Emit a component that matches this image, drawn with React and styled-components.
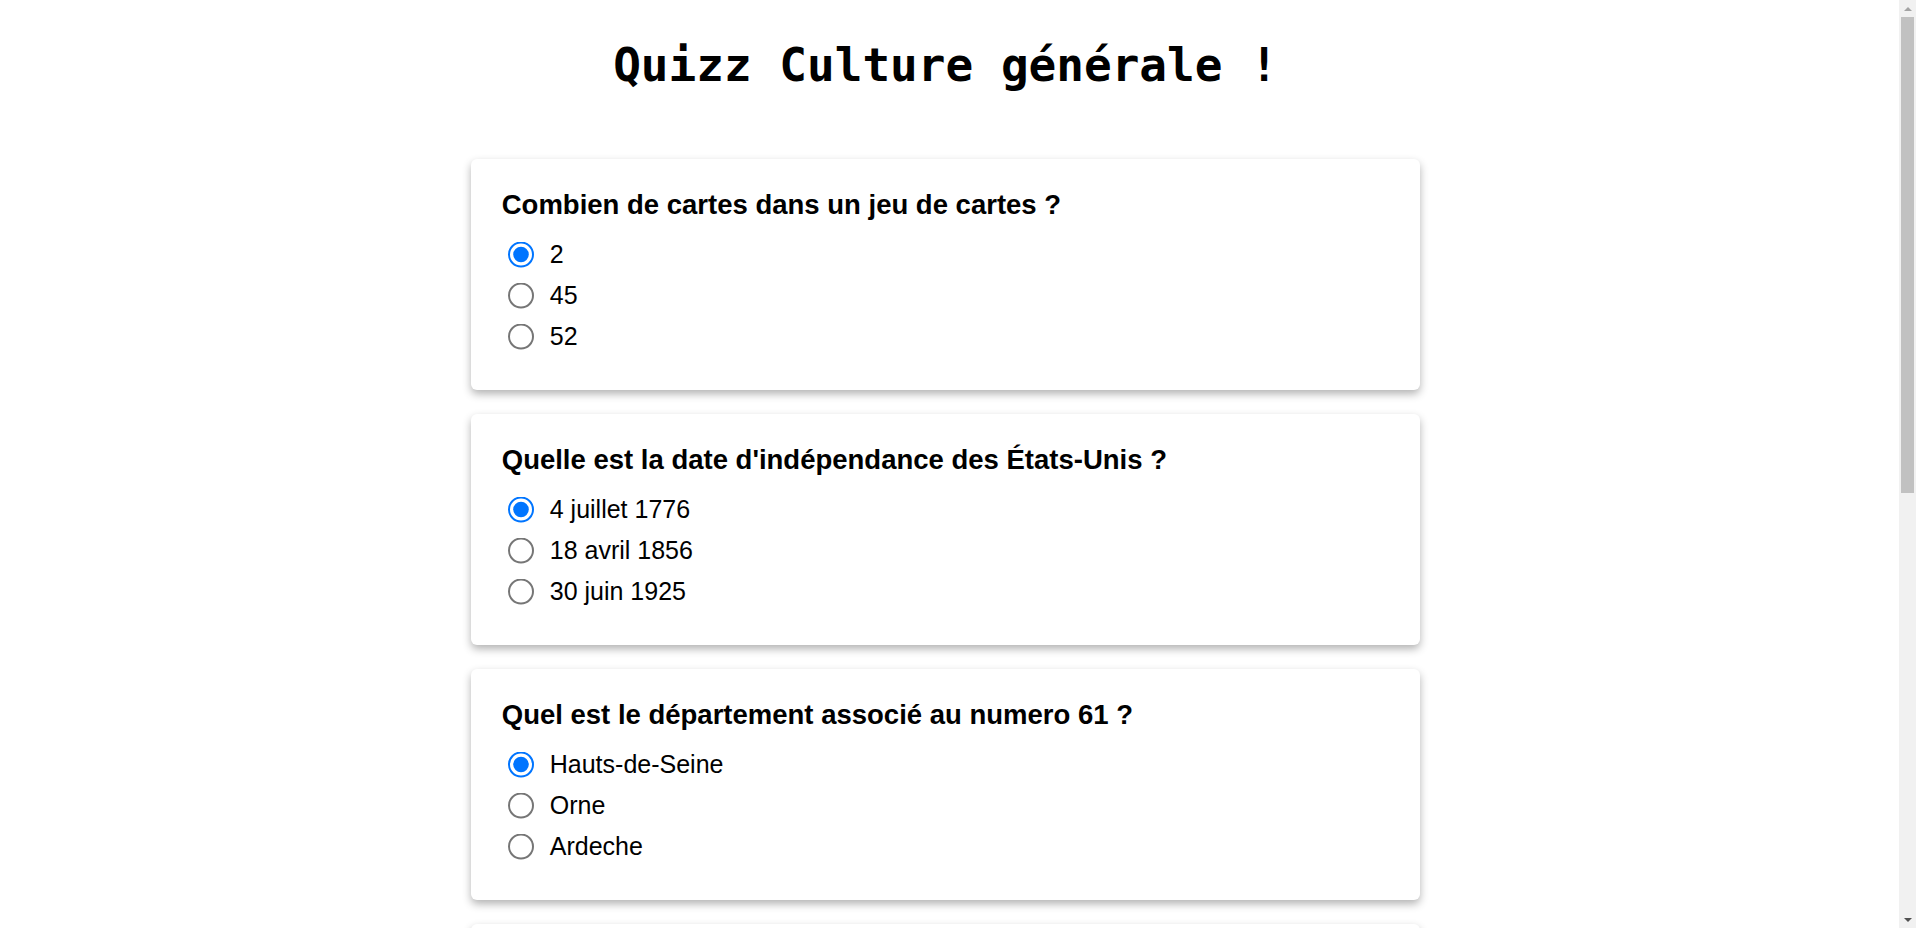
import React from 'react';
import styled, { createGlobalStyle } from 'styled-components';

const GlobalStyle = createGlobalStyle`
  body {
    margin: 0;
    background: #fff;
    font-family: "Liberation Sans", Arial, sans-serif;
  }
`;

const Page = styled.main`
  margin-right: 17px; /* room for the scrollbar */
  padding: 35px 8px 24px 0;
`;

const Title = styled.h1`
  margin: 0 0 64px;
  text-align: center;
  font-family: "DejaVu Sans Mono", monospace;
  font-weight: bold;
  font-size: 46px;
  line-height: 60px;
  color: #000;
`;

const Form = styled.form`
  width: calc(50% + 4px);
  margin: 0 auto;
`;

const Card = styled.section`
  background: #fff;
  border-radius: 6px;
  box-shadow: 0 4px 8px rgba(0, 0, 0, 0.3);
  padding: 30px 31px 33px;
  margin-bottom: 24px;
`;

const Question = styled.h2`
  margin: 0 0 14px;
  font-size: 27.5px;
  line-height: 31px;
  font-weight: bold;
  color: #000;
`;

const Option = styled.label`
  display: flex;
  align-items: center;
  height: 41px;
  font-size: 25px;
  color: #000;
  cursor: pointer;
`;

const Radio = styled.input`
  width: 13px;
  height: 13px;
  margin: 0 29px 0 6px;
  transform: scale(2);
  transform-origin: left center;
  cursor: pointer;
`;

const SubmitButton = styled.button`
  display: block;
  margin: 0 auto;
  padding: 10px 32px;
  font-family: "Liberation Sans", Arial, sans-serif;
  font-size: 22px;
  font-weight: bold;
  color: #fff;
  background: #0075ff;
  border: none;
  border-radius: 6px;
  cursor: pointer;
`;

/* classic browser scrollbar drawn over the right edge */
const ScrollBar = styled.div`
  position: fixed;
  top: 0;
  right: 0;
  width: 17px;
  height: 100vh;
  background: #f1f1f1;
  display: flex;
  flex-direction: column;
`;

const ScrollButton = styled.div`
  height: 17px;
  display: flex;
  align-items: center;
  justify-content: center;
  flex-shrink: 0;

  &::before {
    content: '';
    border-left: 4px solid transparent;
    border-right: 4px solid transparent;
    ${(p) => (p.$down
      ? 'border-top: 4px solid #505050;'
      : 'border-bottom: 4px solid #a3a3a3;')}
  }
`;

const ScrollTrack = styled.div`
  flex: 1;
  padding: 0 2px;
`;

const ScrollThumb = styled.div`
  height: 476px;
  background: #c1c1c1;
`;

const questions = [
  { q: 'Combien de cartes dans un jeu de cartes ?', a: ['2', '45', '52'] },
  { q: "Quelle est la date d'indépendance des États-Unis ?", a: ['4 juillet 1776', '18 avril 1856', '30 juin 1925'] },
  { q: 'Quel est le département associé au numero 61 ?', a: ['Hauts-de-Seine', 'Orne', 'Ardeche'] },
  { q: "Quelle est la capitale de l'Australie ?", a: ['Sydney', 'Canberra', 'Melbourne'] },
  { q: 'Combien de joueurs dans une équipe de football ?', a: ['9', '11', '15'] },
  { q: 'Qui a peint la Joconde ?', a: ['Michel-Ange', 'Léonard de Vinci', 'Raphaël'] },
];

const App = () => {
  return (
    <>
      <GlobalStyle />
      <Page>
        <Title>Quizz Culture générale !</Title>
        <Form onSubmit={(e) => e.preventDefault()}>
          {questions.map((item, i) => (
            <Card key={i}>
              <Question>{item.q}</Question>
              {item.a.map((answer, j) => (
                <Option key={j}>
                  <Radio type="radio" name={`q${i}`} value={answer} defaultChecked={j === 0} />
                  {answer}
                </Option>
              ))}
            </Card>
          ))}
          <SubmitButton type="submit">Valider</SubmitButton>
        </Form>
      </Page>
      <ScrollBar>
        <ScrollButton />
        <ScrollTrack>
          <ScrollThumb />
        </ScrollTrack>
        <ScrollButton $down />
      </ScrollBar>
    </>
  );
};

export default App;
